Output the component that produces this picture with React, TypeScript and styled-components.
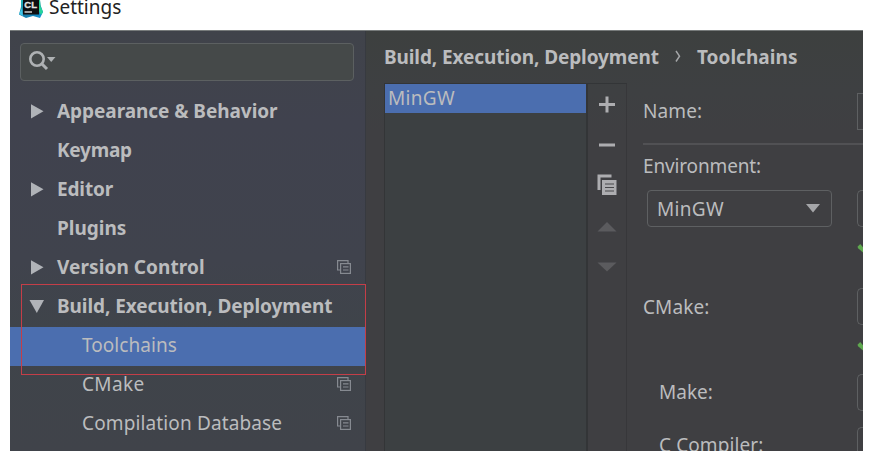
import React from "react";
import styled, { createGlobalStyle } from "styled-components";

const Global = createGlobalStyle`
  * { box-sizing: border-box; }
  html, body { margin: 0; background: #fff; overflow: hidden; }
  body { font-family: "Noto Sans", "Open Sans", sans-serif; font-size: 19px; color: #bbbcbe; }
`;

const Page = styled.div`
  width: 872px;
  height: 461px;
  overflow: hidden;
  display: flex;
  flex-direction: column;
`;

const TitleBar = styled.header`
  flex: none;
  height: 30px;
  padding-left: 19px;
  display: flex;
  align-items: flex-start;
  gap: 6px;
  color: #222;
`;

const Label = styled.span<{ $track?: number; $bold?: boolean; $size?: number }>`
  line-height: 26px;
  white-space: nowrap;
  letter-spacing: ${(p) => p.$track ?? 0}px;
  font-weight: ${(p) => (p.$bold ? 700 : 400)};
  font-size: ${(p) => p.$size ?? 19}px;
`;

const TitleText = styled(Label)`
  margin-top: -6px;
`;

const Dialog = styled.div`
  flex: none;
  width: 853px;
  height: 421px;
  margin-left: 10px;
  display: flex;
  overflow: hidden;
  background: linear-gradient(#3d403f, #3e4042 60px, #3f3f42 100px);
  border-top: 1px solid #777b7b;
`;

const Sidebar = styled.aside`
  flex: none;
  width: 356px;
  background: linear-gradient(#40434a, #40424e 90px, #40434d 230px, #3f444a 300px, #40434a);
  border-right: 1px solid #373a40;
`;

const Search = styled.div`
  width: 334px;
  height: 38px;
  margin: 12px 0 0 10px;
  padding: 6px 0 0 7px;
  border: 1px solid #5c6061;
  border-radius: 4px;
  background: #454949;
`;

const Tree = styled.div`
  position: relative;
  margin-top: 11px;
`;

const TreeRow = styled.div<{ $selected?: boolean; $child?: boolean }>`
  height: 39.1px;
  padding: 0 14px 2px ${(p) => (p.$child ? 72 : 19)}px;
  display: flex;
  align-items: center;
  background: ${(p) => (p.$selected ? "#4b6eaf" : "transparent")};
`;

const Twisty = styled.span`
  flex: none;
  width: 28px;
  height: 16px;
  display: flex;
  align-items: center;
`;

const RowLabel = styled(Label)`
  flex: 1;
`;

const Highlight = styled.div`
  position: absolute;
  left: 11px;
  top: 192px;
  width: 345px;
  height: 91px;
  border: 1px solid #c43e48;
`;

const Main = styled.main`
  flex: 1;
  min-width: 0;
  padding-left: 18px;
  display: flex;
  flex-direction: column;
`;

const Breadcrumb = styled.div`
  flex: none;
  height: 52px;
  padding: 13px 0 0 0;
  display: flex;
`;

const Separator = styled.span`
  width: 38px;
  display: flex;
  justify-content: center;
  padding-top: 6px;
`;

const Body = styled.div`
  flex: 1;
  min-height: 0;
  display: flex;
`;

const ToolchainList = styled.div`
  flex: none;
  width: 204px;
  border: 1px solid #333537;
  border-bottom: 0;
  border-right-width: 2px;
  background: #3c4042;
`;

const ListItem = styled.div`
  height: 29px;
  padding: 1px 0 0 3px;
  background: #4b6eaf;
`;

const Tools = styled.div`
  flex: none;
  width: 39px;
  border-top: 1px solid #333537;
  border-right: 1px solid #37373a;
  svg { display: block; }
`;

const Form = styled.div`
  flex: 1;
  min-width: 0;
  overflow: hidden;
  padding-left: 16px;
`;

const Field = styled.div<{ $h: number; $indent?: number }>`
  height: ${(p) => p.$h}px;
  padding-left: ${(p) => p.$indent ?? 0}px;
  display: flex;
  align-items: flex-start;
  justify-content: space-between;
`;

const FieldLabel = styled(Label)<{ $top: number }>`
  margin-top: ${(p) => p.$top}px;
`;

const InputEdge = styled.div<{ $square?: boolean }>`
  flex: none;
  width: 6px;
  height: 37px;
  border: 1px solid #5e6062;
  border-right: 0;
  border-radius: ${(p) => (p.$square ? 0 : "5px 0 0 5px")};
`;

const Rule = styled.div`
  height: 2px;
  background: #515154;
`;

const Select = styled.div`
  width: 185px;
  height: 37px;
  padding: 0 11px 0 9px;
  display: flex;
  align-items: center;
  justify-content: space-between;
  border: 1px solid #5e6062;
  border-radius: 4px;
`;

const CheckLine = styled.div<{ $h: number; $top: number }>`
  height: ${(p) => p.$h}px;
  padding-top: ${(p) => p.$top}px;
  display: flex;
  justify-content: flex-end;
  svg { display: block; }
`;

const Logo = () => (
  <svg width="24" height="20" viewBox="0 0 24 20">
    <defs>
      <linearGradient id="l" x1="0" y1="0" x2="1" y2="1">
        <stop offset="0" stopColor="#22c2c0" />
        <stop offset="0.45" stopColor="#18779f" />
        <stop offset="1" stopColor="#1597d8" />
      </linearGradient>
    </defs>
    <path d="M2 0H21L21.500 5L24 12L21 18L14 16L7 18L0 14.500L2 7Z" fill="url(#l)" />
    <path d="M19 0H21L21.500 6L24 12L22 15L19 9Z" fill="#25d59a" />
    <path d="M0 14L3 8L4 16Z" fill="#43c6e8" />
    <rect x="4" y="0" width="16" height="14.500" fill="#0d0f12" />
    <text x="5.300" y="8" fontFamily="Liberation Sans" fontSize="9.500" fontWeight="700" fill="#e5e5e5" stroke="#e5e5e5" strokeWidth="0.300">CL</text>
    <rect x="5.500" y="11.300" width="7.500" height="1.400" fill="#ddd" />
  </svg>
);

const Arrow = ({ open }: { open?: boolean }) => (
  <svg width="16" height="16" viewBox="0 0 16 16" fill="#b0b3b8">
    {open ? <path d="M0.500 2H15L7.800 15Z" /> : <path d="M2 1.200V15.500L14.500 8.300Z" />}
  </svg>
);

const Shared = () => (
  <svg width="14" height="14" viewBox="0 0 14 14" fill="none" stroke="#868a91" strokeWidth="1.2">
    <path d="M3 10H.6V.6H11V3" />
    <rect x="3.6" y="3.6" width="9.8" height="9.8" />
    <path d="M6 6.8H11.5M6 10H11.5" />
  </svg>
);

const Check = () => (
  <svg width="6" height="12" viewBox="0 0 6 12">
    <path d="M.8 4.500L3.200 2L6 5.200V10.500L.8 6Z" fill="#5fa84f" />
  </svg>
);

type Item = { name: string; track: number; twisty?: "open" | "closed"; child?: boolean; shared?: boolean; selected?: boolean };

const items: Item[] = [
  { name: "Appearance & Behavior", track: -0.05, twisty: "closed" },
  { name: "Keymap", track: -0.25 },
  { name: "Editor", track: -0.15, twisty: "closed" },
  { name: "Plugins", track: 0 },
  { name: "Version Control", track: 0.08, twisty: "closed", shared: true },
  { name: "Build, Execution, Deployment", track: -0.08, twisty: "open" },
  { name: "Toolchains", track: 0.05, child: true, selected: true },
  { name: "CMake", track: 0.35, child: true, shared: true },
  { name: "Compilation Database", track: 0.13, child: true, shared: true },
];

export default function App() {
  return (
    <Page>
      <Global />
      <TitleBar>
        <Logo />
        <TitleText>Settings</TitleText>
      </TitleBar>
      <Dialog>
        <Sidebar>
          <Search>
            <svg width="30" height="24" viewBox="0 0 30 24">
              <circle cx="9" cy="9" r="6.7" fill="none" stroke="#aeb1b3" strokeWidth="2.6" />
              <path d="M13.5 13.5L19 19" stroke="#aeb1b3" strokeWidth="3" />
              <path d="M19 7H27.5L23.2 12Z" fill="#aeb1b3" />
            </svg>
          </Search>
          <Tree>
            {items.map((it) => (
              <TreeRow key={it.name} $child={it.child} $selected={it.selected}>
                {!it.child && <Twisty>{it.twisty && <Arrow open={it.twisty === "open"} />}</Twisty>}
                <RowLabel $bold={!it.child} $track={it.track}>{it.name}</RowLabel>
                {it.shared && <Shared />}
              </TreeRow>
            ))}
            <Highlight />
          </Tree>
        </Sidebar>
        <Main>
          <Breadcrumb>
            <Label $bold $track={-0.1}>Build, Execution, Deployment</Label>
            <Separator>
              <svg width="6" height="13" viewBox="0 0 6 13" fill="none" stroke="#a4a6a8" strokeWidth="1.5">
                <path d="M1 1L4.5 6.2L1 11.5" />
              </svg>
            </Separator>
            <Label $bold $track={0.05}>Toolchains</Label>
          </Breadcrumb>
          <Body>
            <ToolchainList>
              <ListItem><Label $track={0.3}>MinGW</Label></ListItem>
            </ToolchainList>
            <Tools>
              <svg width="38" height="200" viewBox="0 0 38 200">
                <path d="M11 20.500H27M19 12.500V28.500M11 61H27" stroke="#adadb0" strokeWidth="3" />
                <path d="M9.500 90.500H23.500V93.500H12.500V106H9.500Z" fill="#adadb0" />
                <path d="M14 96H28.500V111H14Z" fill="#adadb0" />
                <path d="M17 100H26M17 103.500H26M17 107H26" stroke="#48484b" strokeWidth="1.2" />
                <path d="M9.500 147.500H28.500L19 138Z" fill="#5b5b5e" />
                <path d="M9.500 178.500H28.500L19 187.500Z" fill="#5b5b5e" />
              </svg>
            </Tools>
            <Form>
              <Field $h={60}>
                <FieldLabel $top={15} $track={0.1}>Name:</FieldLabel>
                <FieldLabel as="div" $top={10}><InputEdge $square /></FieldLabel>
              </Field>
              <Rule />
              <Field $h={45}>
                <FieldLabel $top={8} $track={-0.15}>Environment:</FieldLabel>
              </Field>
              <Field $h={37} $indent={4}>
                <Select>
                  <Label $track={0.3}>MinGW</Label>
                  <svg width="14" height="9" viewBox="0 0 14 9"><path d="M0 0H14L7 8.500Z" fill="#a5a6a9" /></svg>
                </Select>
                <InputEdge />
              </Field>
              <CheckLine $h={61} $top={15}><Check /></CheckLine>
              <Field $h={37}>
                <FieldLabel $top={6} $track={0.1}>CMake:</FieldLabel>
                <InputEdge />
              </Field>
              <CheckLine $h={49} $top={15}><Check /></CheckLine>
              <Field $h={53} $indent={16}>
                <FieldLabel $top={5}>Make:</FieldLabel>
                <InputEdge />
              </Field>
              <Field $h={37} $indent={16}>
                <FieldLabel $top={5} $track={0.1}>C Compiler:</FieldLabel>
                <InputEdge />
              </Field>
            </Form>
          </Body>
        </Main>
      </Dialog>
    </Page>
  );
}
